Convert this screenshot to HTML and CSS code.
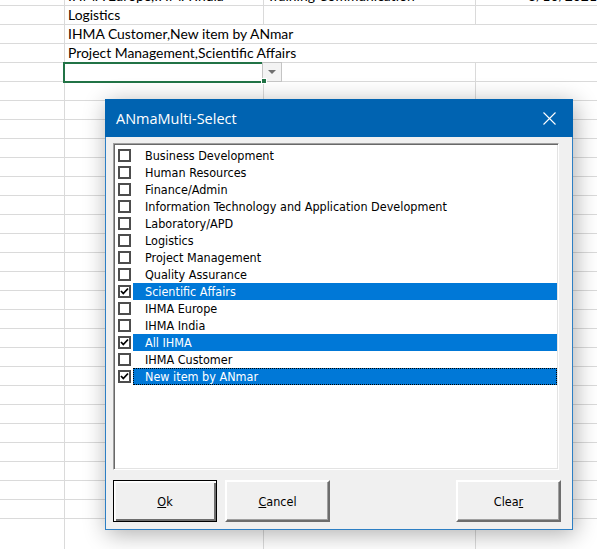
FILE: index.html
```html
<!DOCTYPE html>
<html lang="en">
<head>
    <meta charset="UTF-8">
    <title>ANmaMulti-Select</title>
    <link rel="stylesheet" href="styles.css">
</head>
<body>
    <div class="sheet">
        <div class="row">
            <div class="cell"></div>
            <div class="cell">IHMA Europe,IHMA India</div>
            <div class="cell">Training Communication</div>
            <div class="cell num">3/10/2021</div>
        </div>
        <div class="row">
            <div class="cell"></div>
            <div class="cell">Logistics</div>
        </div>
        <div class="row">
            <div class="cell"></div>
            <div class="cell spill">IHMA Customer,New item by ANmar</div>
        </div>
        <div class="row">
            <div class="cell"></div>
            <div class="cell spill">Project Management,Scientific Affairs</div>
        </div>
        <div class="row">
            <div class="cell"></div>
            <div class="cell active">
                <span class="dropdown"></span>
                <span class="fill-handle"></span>
            </div>
        </div>
    </div>

    <div class="dialog">
        <div class="titlebar">
            <span class="title">ANmaMulti-Select</span>
            <svg class="close" width="13" height="13" viewBox="0 0 13 13">
                <path d="M0.5 0.5 L12.5 12.5 M12.5 0.5 L0.5 12.5" stroke="#fff" stroke-width="1.1" fill="none"/>
            </svg>
        </div>

        <div class="dialog-body">
            <div class="listbox">
                <div class="item"><span class="box"></span><span class="label">Business Development</span></div>
                <div class="item"><span class="box"></span><span class="label">Human Resources</span></div>
                <div class="item"><span class="box"></span><span class="label">Finance/Admin</span></div>
                <div class="item"><span class="box"></span><span class="label">Information Technology and Application Development</span></div>
                <div class="item"><span class="box"></span><span class="label">Laboratory/APD</span></div>
                <div class="item"><span class="box"></span><span class="label">Logistics</span></div>
                <div class="item"><span class="box"></span><span class="label">Project Management</span></div>
                <div class="item"><span class="box"></span><span class="label">Quality Assurance</span></div>
                <div class="item checked">
                    <span class="box"><svg width="9" height="9" viewBox="0 0 9 9"><path d="M1 4 L3.3 6.5 L8 1.5" stroke="#000" stroke-width="1.8" fill="none"/></svg></span>
                    <span class="label">Scientific Affairs</span>
                </div>
                <div class="item"><span class="box"></span><span class="label">IHMA Europe</span></div>
                <div class="item"><span class="box"></span><span class="label">IHMA India</span></div>
                <div class="item checked">
                    <span class="box"><svg width="9" height="9" viewBox="0 0 9 9"><path d="M1 4 L3.3 6.5 L8 1.5" stroke="#000" stroke-width="1.8" fill="none"/></svg></span>
                    <span class="label">All IHMA</span>
                </div>
                <div class="item"><span class="box"></span><span class="label">IHMA Customer</span></div>
                <div class="item checked focused">
                    <span class="box"><svg width="9" height="9" viewBox="0 0 9 9"><path d="M1 4 L3.3 6.5 L8 1.5" stroke="#000" stroke-width="1.8" fill="none"/></svg></span>
                    <span class="label">New item by ANmar</span>
                </div>
            </div>

            <div class="buttons">
                <button class="btn default"><u>O</u>k</button>
                <button class="btn"><u>C</u>ancel</button>
                <button class="btn clear">Clea<u>r</u></button>
            </div>
        </div>
    </div>
</body>
</html>
```

FILE: styles.css
```css
* {
    margin: 0;
    padding: 0;
    box-sizing: border-box;
}

html {
    background-color: #fff;
}

body {
    min-height: 100vh;
    overflow: hidden;
    font-family: Lato, "Liberation Sans", sans-serif;
    background-color: #fff;
    /* excel gridlines */
    background-image:
        linear-gradient(to right,
            transparent 64px, #dadada 64px, #dadada 65px,
            transparent 65px, transparent 263px, #dadada 263px, #dadada 264px,
            transparent 264px, transparent 475px, #dadada 475px, #dadada 476px,
            transparent 476px),
        repeating-linear-gradient(to bottom, transparent 0, transparent 18px, #dadada 18px, #dadada 19px);
    background-position: 0 0, 0 -13px;
}

/* spreadsheet */

.sheet {
    margin-top: -13px;
}

.row {
    display: grid;
    grid-template-columns: 65px 199px 212px 124px;
    height: 19px;
}

.cell {
    position: relative;
    height: 18px;
    padding: 0 3px;
    font-size: 13.9px;
    line-height: 17px;
    color: #000;
    white-space: nowrap;
}

.cell.num {
    text-align: right;
}

.cell.spill {
    grid-column: span 2;
    background: #fff;
}

.cell.active::after {
    content: "";
    position: absolute;
    top: -1px;
    left: -2px;
    right: -1px;
    bottom: -2px;
    border: 2px solid #217346;
}

.dropdown {
    position: absolute;
    left: calc(100% - 2px);
    top: -1px;
    width: 20px;
    height: 20px;
    background: #f3f3f3;
    border: 1px solid #c4c4c4;
    z-index: 1;
}

.dropdown::after {
    content: "";
    position: absolute;
    left: 5px;
    top: 7px;
    border-left: 4px solid transparent;
    border-right: 4px solid transparent;
    border-top: 4px solid #6f6f6f;
}

.fill-handle {
    position: absolute;
    right: -3px;
    bottom: -3px;
    width: 6px;
    height: 6px;
    background: #217346;
    border: 1px solid #fff;
    z-index: 2;
}

/* userform */

.dialog {
    position: absolute;
    left: 105px;
    top: 99px;
    width: 468px;
    height: 431px;
    background: #f0f0f0;
    border: 1px solid #2d7fc4;
    box-shadow: 2px 4px 22px rgba(0, 0, 0, 0.32);
    display: flex;
    flex-direction: column;
}

.titlebar {
    height: 38px;
    flex-shrink: 0;
    margin: -1px -1px 0;
    background: #0063b1;
    display: flex;
    align-items: center;
    justify-content: space-between;
    padding: 0 17px 0 11px;
}

.title {
    color: #fff;
    font-family: "Open Sans", "Noto Sans", sans-serif;
    font-size: 14.5px;
}

.close {
    display: block;
}

.dialog-body {
    flex: 1;
    padding: 6px 11px 7px 7px;
    display: flex;
    flex-direction: column;
    font-family: "DejaVu Sans Condensed", "DejaVu Sans", sans-serif;
    font-size: 12.5px;
    color: #000;
}

.listbox {
    width: 446px;
    height: 327px;
    flex-shrink: 0;
    background: #fff;
    border: 1px solid;
    border-color: #a0a0a0 #fff #fff #a0a0a0;
    box-shadow: inset 1px 1px #696969, inset -1px -1px #e3e3e3;
    padding: 3px 1px 0 1px;
}

.item {
    display: flex;
    align-items: center;
    height: 17px;
}

.box {
    width: 13px;
    height: 13px;
    margin: 0 2px 0 3px;
    border: 2px solid #4d4d4d;
    background: #fff;
    display: flex;
    align-items: center;
    justify-content: center;
    flex-shrink: 0;
}

.box svg {
    display: block;
}

.label {
    flex: 1;
    height: 17px;
    line-height: 18px;
    padding-left: 12px;
    white-space: nowrap;
}

.item.checked .label {
    background: #0078d7;
    color: #fff;
}

.item.focused .label {
    outline: 1px dotted #000;
    outline-offset: -1px;
}

.buttons {
    display: flex;
    gap: 8px;
    margin-top: 10px;
}

.btn {
    width: 105px;
    height: 42px;
    background: #f0f0f0;
    font-family: inherit;
    font-size: 12.5px;
    color: #000;
    border: 2px solid;
    border-color: #fff #6d6d6d #6d6d6d #fff;
    box-shadow: inset -1px -1px #a0a0a0;
}

.btn.default {
    width: 104px;
    border: 1px solid #000;
    box-shadow: inset 1px 1px #fff, inset 2px 2px #fafafa, inset -2px -2px #6d6d6d;
}

.btn.clear {
    margin-left: auto;
}
```
